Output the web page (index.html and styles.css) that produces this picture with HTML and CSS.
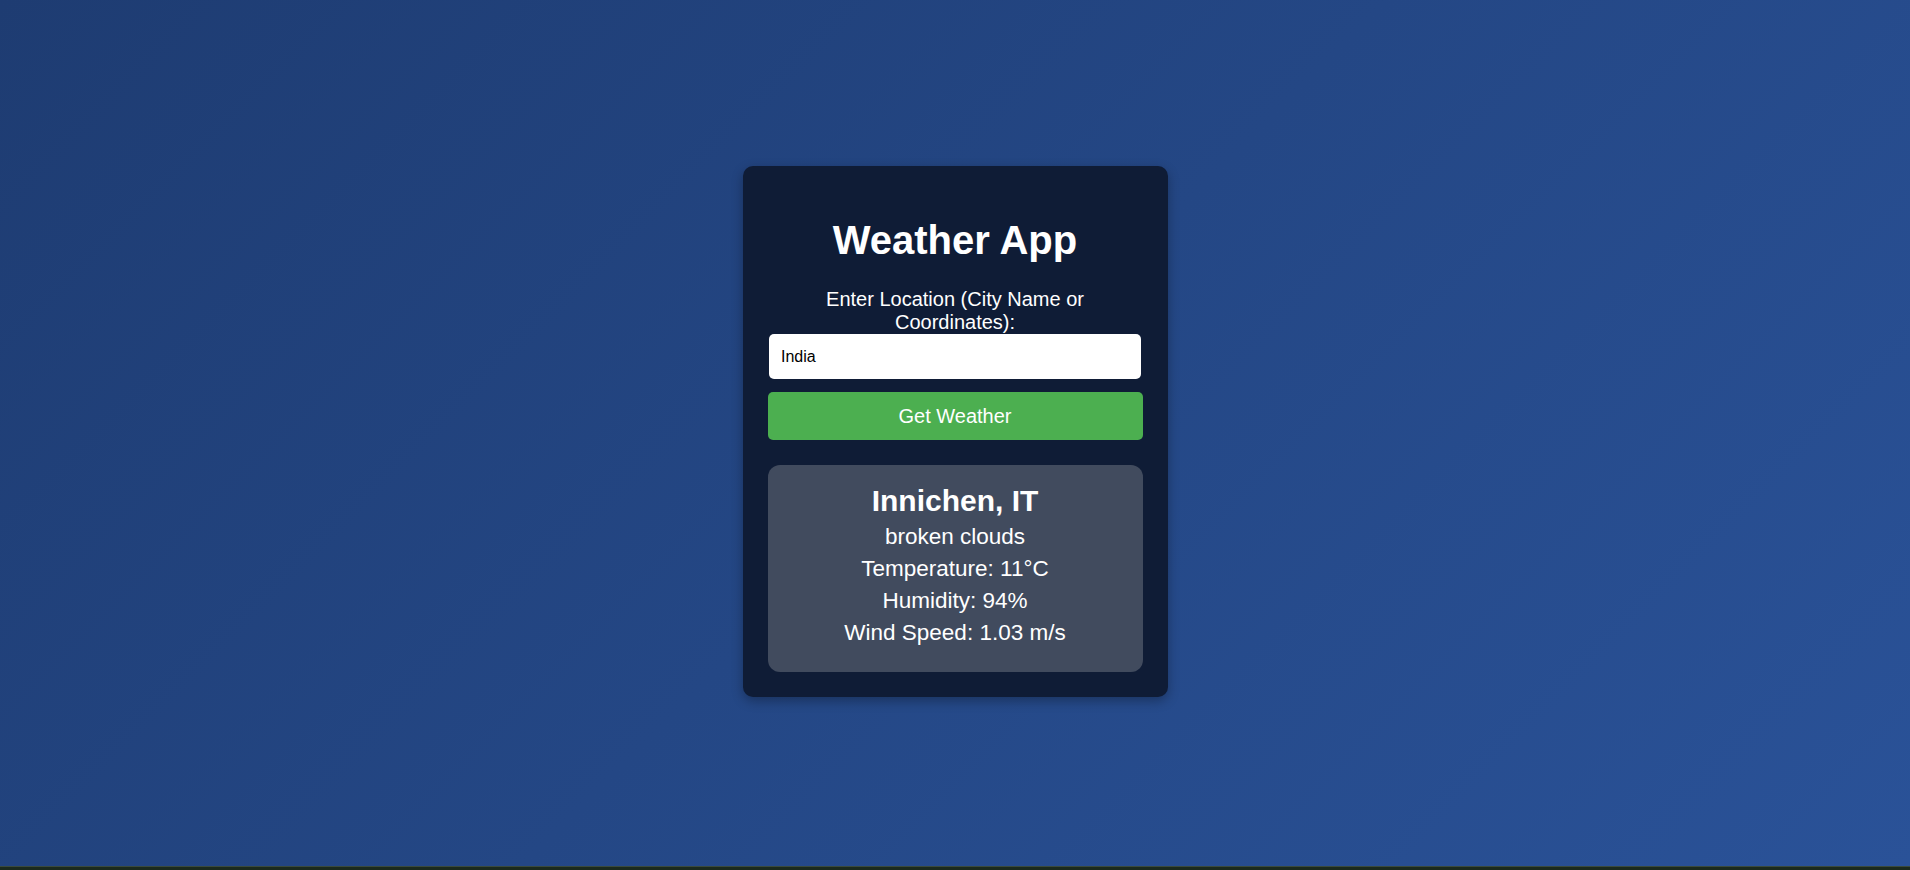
FILE: index.html
```html
<!DOCTYPE html>
<html lang="en">
<head>
<meta charset="utf-8">
<title>Weather App</title>
<link rel="stylesheet" href="styles.css">
</head>
<body>
<div class="page">
  <div class="card">
    <h1 class="title">Weather App</h1>
    <label class="label" for="loc">Enter Location (City Name or Coordinates):</label>
    <input class="input" id="loc" type="text" value="India">
    <button class="btn" type="button">Get Weather</button>
    <div class="result">
      <h2 class="city">Innichen, IT</h2>
      <p class="line">broken clouds</p>
      <p class="line">Temperature: 11°C</p>
      <p class="line">Humidity: 94%</p>
      <p class="line">Wind Speed: 1.03 m/s</p>
    </div>
  </div>
</div>
<div class="bottom-bar"></div>
</body>
</html>
```
FILE: styles.css
```css
html, body {
  margin: 0;
  padding: 0;
  background: #1b2a1e;
  overflow: hidden;
}
body {
  font-family: "Liberation Sans", Arial, sans-serif;
  color: #fff;
}
.page {
  height: 866px;
  box-sizing: border-box;
  padding-bottom: 3px;
  background: linear-gradient(135deg, #1e3c72 0%, #2a5298 100%);
  display: flex;
  align-items: center;
  justify-content: center;
}
.card {
  width: 425px;
  box-sizing: border-box;
  padding: 25px;
  background: #0f1c36;
  border-radius: 10px;
  box-shadow: 0 4px 12px rgba(0, 0, 0, 0.3);
  display: flex;
  flex-direction: column;
  text-align: center;
}
.title {
  margin: 26px 0 25px;
  font-size: 40px;
  line-height: 46px;
  font-weight: bold;
}
.label {
  display: block;
  font-size: 20px;
  line-height: 23px;
  padding: 0 10px;
}
.input {
  display: block;
  box-sizing: border-box;
  width: calc(100% - 3px);
  margin: 0 auto;
  height: 45px;
  border: none;
  border-radius: 5px;
  padding: 0 12px;
  font-family: "Liberation Sans", Arial, sans-serif;
  font-size: 16px;
  color: #000;
  background: #fff;
  outline: none;
}
.btn {
  display: block;
  width: 100%;
  height: 48px;
  margin-top: 13px;
  border: none;
  border-radius: 5px;
  background: #4caf50;
  color: #fff;
  font-family: "Liberation Sans", Arial, sans-serif;
  font-size: 20px;
}
.result {
  margin-top: 25px;
  padding: 18px 10px 23px;
  background: #414b5e;
  border-radius: 12px;
}
.city {
  margin: 0 0 2px;
  font-size: 30px;
  line-height: 36px;
  font-weight: bold;
}
.line {
  margin: 0;
  font-size: 22.5px;
  line-height: 32px;
}
.bottom-bar {
  height: 4px;
  background: #1b2a1e;
  border-top: 1px solid #3a4a3c;
  box-sizing: border-box;
}
```
